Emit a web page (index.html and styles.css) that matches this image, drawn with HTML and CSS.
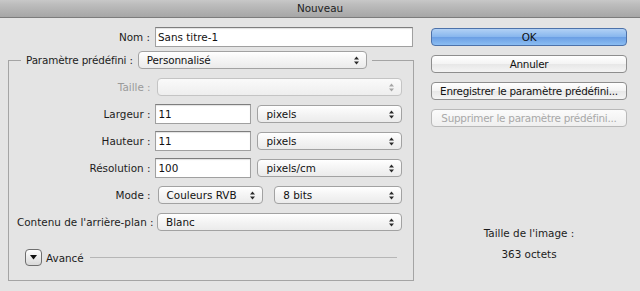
FILE: index.html
```html
<!DOCTYPE html>
<html lang="fr">
<head>
    <meta charset="UTF-8">
    <meta name="viewport" content="width=device-width, initial-scale=1.0">
    <title>Nouveau</title>
    <link rel="stylesheet" href="styles.css">
</head>
<body>
    <div class="titlebar">Nouveau</div>

    <div class="dialog">
        <div class="main">
            <div class="name-row">
                <label class="lbl" for="docName">Nom :</label>
                <input type="text" id="docName" class="field name" value="Sans titre-1">
            </div>

            <fieldset class="preset">
                <legend>
                    <span>Paramètre prédéfini :</span>
                    <div class="popup preset-popup">Personnalisé
                        <svg class="arrows" width="5" height="9" viewBox="0 0 5 9"><path d="M0 3.5L2.5 0.5L5 3.5Z M0 5.5L2.5 8.5L5 5.5Z"/></svg>
                    </div>
                </legend>

                <div class="rows">
                    <div class="row disabled">
                        <span class="lbl">Taille :</span>
                        <div class="popup wide off">
                            <span></span>
                            <svg class="arrows" width="5" height="9" viewBox="0 0 5 9"><path d="M0 3.5L2.5 0.5L5 3.5Z M0 5.5L2.5 8.5L5 5.5Z"/></svg>
                        </div>
                    </div>
                    <div class="row">
                        <label class="lbl" for="width">Largeur :</label>
                        <input type="text" id="width" class="field num" value="11">
                        <div class="popup unit">pixels
                            <svg class="arrows" width="5" height="9" viewBox="0 0 5 9"><path d="M0 3.5L2.5 0.5L5 3.5Z M0 5.5L2.5 8.5L5 5.5Z"/></svg>
                        </div>
                    </div>
                    <div class="row">
                        <label class="lbl" for="height">Hauteur :</label>
                        <input type="text" id="height" class="field num" value="11">
                        <div class="popup unit">pixels
                            <svg class="arrows" width="5" height="9" viewBox="0 0 5 9"><path d="M0 3.5L2.5 0.5L5 3.5Z M0 5.5L2.5 8.5L5 5.5Z"/></svg>
                        </div>
                    </div>
                    <div class="row">
                        <label class="lbl" for="res">Résolution :</label>
                        <input type="text" id="res" class="field num" value="100">
                        <div class="popup unit">pixels/cm
                            <svg class="arrows" width="5" height="9" viewBox="0 0 5 9"><path d="M0 3.5L2.5 0.5L5 3.5Z M0 5.5L2.5 8.5L5 5.5Z"/></svg>
                        </div>
                    </div>
                    <div class="row">
                        <span class="lbl">Mode :</span>
                        <div class="popup mode">Couleurs RVB
                            <svg class="arrows" width="5" height="9" viewBox="0 0 5 9"><path d="M0 3.5L2.5 0.5L5 3.5Z M0 5.5L2.5 8.5L5 5.5Z"/></svg>
                        </div>
                        <div class="popup depth">8 bits
                            <svg class="arrows" width="5" height="9" viewBox="0 0 5 9"><path d="M0 3.5L2.5 0.5L5 3.5Z M0 5.5L2.5 8.5L5 5.5Z"/></svg>
                        </div>
                    </div>
                    <div class="row">
                        <span class="lbl">Contenu de l'arrière-plan :</span>
                        <div class="popup wide">Blanc
                            <svg class="arrows" width="5" height="9" viewBox="0 0 5 9"><path d="M0 3.5L2.5 0.5L5 3.5Z M0 5.5L2.5 8.5L5 5.5Z"/></svg>
                        </div>
                    </div>
                </div>

                <div class="advanced">
                    <span class="disclosure">
                        <svg width="7" height="5" viewBox="0 0 7 5"><path d="M0 0H7L3.5 4.5Z"/></svg>
                    </span>
                    <span>Avancé</span>
                    <span class="rule"></span>
                </div>
            </fieldset>
        </div>

        <div class="side">
            <div class="buttons">
                <button type="button" class="btn default">OK</button>
                <button type="button" class="btn">Annuler</button>
                <button type="button" class="btn">Enregistrer le paramètre prédéfini...</button>
                <button type="button" class="btn" disabled>Supprimer le paramètre prédéfini...</button>
            </div>

            <div class="info">
                <p>Taille de l'image :</p>
                <p>363 octets</p>
            </div>
        </div>
    </div>
</body>
</html>
```

FILE: styles.css
```css
body {
    margin: 0;
    font-family: "DejaVu Sans", sans-serif;
    font-size: 10.4px;
    color: #1c1c1c;
    background-color: #e4e4e4;
}

.titlebar {
    height: 17px;
    line-height: 17px;
    text-align: center;
    color: #222;
    background: linear-gradient(#c8c8c8, #bdbdbd 25%, #a6a6a6);
    border-bottom: 1px solid #7c7c7c;
}

.dialog {
    display: flex;
}

.main {
    padding: 9px 0 0 8px;
}

.name-row {
    display: flex;
    align-items: center;
    gap: 5px;
}

.name-row .lbl {
    width: 142px;
    text-align: right;
}

.field {
    height: 20px;
    box-sizing: border-box;
    margin: 0;
    padding: 0 2px;
    border: 1px solid #a0a0a0;
    border-top-color: #7e7e7e;
    background-color: #fff;
    box-shadow: inset 0 1px 1px rgba(0, 0, 0, 0.12);
    font: inherit;
    color: #111;
    outline: none;
}

.name {
    width: 258px;
}

.num {
    width: 96px;
}

.preset {
    width: 406px;
    box-sizing: border-box;
    min-width: 0;
    margin: 4px 0 0;
    padding: 8px 11px 14px 8px;
    border: 1px solid #a4a4a4;
}

.preset legend {
    display: flex;
    align-items: center;
    gap: 5px;
    margin-left: 4px;
    padding: 0 5px;
    letter-spacing: -0.15px;
}

.popup {
    height: 18px;
    box-sizing: border-box;
    display: flex;
    align-items: center;
    justify-content: space-between;
    padding: 0 7px 0 8px;
    border: 1px solid #a2a2a2;
    border-radius: 4px;
    background: linear-gradient(#ffffff, #f4f4f4 50%, #ebebeb);
    color: #111;
}

.arrows {
    fill: #2a2a2a;
}

.preset-popup {
    width: 229px;
}

.rows {
    display: flex;
    flex-direction: column;
    gap: 7px;
}

.row {
    display: flex;
    align-items: center;
    height: 20px;
}

.row .lbl {
    width: 134px;
    margin-right: 5px;
    text-align: right;
    white-space: nowrap;
}

.row.disabled .lbl {
    color: #9a9a9a;
}

.popup.wide {
    width: 246px;
    margin-left: 1px;
}

.popup.off {
    border-color: #c4c4c4;
    background: linear-gradient(#fafafa, #eeeeee);
}

.popup.off .arrows {
    fill: #a5a5a5;
}

.popup.unit {
    width: 145px;
    margin-left: 6px;
}

.popup.mode {
    width: 106px;
    margin-left: 2px;
}

.popup.depth {
    width: 128px;
    margin-left: 11px;
}

.advanced {
    display: flex;
    align-items: center;
    height: 17px;
    margin: 17px 0 0 8px;
}

.disclosure {
    width: 17px;
    height: 17px;
    box-sizing: border-box;
    display: flex;
    align-items: center;
    justify-content: center;
    margin-right: 4px;
    border: 1px solid #6e6e6e;
    border-radius: 4px;
    background: linear-gradient(#ffffff, #d8d8d8);
}

.disclosure svg {
    fill: #111;
}

.rule {
    flex: 1;
    height: 1px;
    margin: 0 5px 0 6px;
    background-color: #b6b6b6;
}

.side {
    width: 196px;
    margin-left: 17px;
    padding-top: 10px;
}

.buttons {
    display: flex;
    flex-direction: column;
    gap: 9px;
}

.btn {
    height: 18px;
    box-sizing: border-box;
    margin: 0;
    padding: 0;
    border: 1px solid #8e8e8e;
    border-radius: 4px;
    background: linear-gradient(#ffffff, #f3f3f3 50%, #e7e7e7 51%, #f4f4f4);
    font: inherit;
    letter-spacing: -0.25px;
    white-space: nowrap;
    color: #111;
    text-align: center;
}

.btn.default {
    border-color: #4d72aa;
    background: linear-gradient(#b2d1f5, #88b7ee 48%, #6b9fe4 52%, #8bbdf2);
}

.btn:disabled {
    border-color: #b9b9b9;
    color: #a8a8a8;
    background: linear-gradient(#fbfbfb, #efefef);
}

.info {
    margin-top: 96px;
    text-align: center;
}

.info p {
    margin: 0;
    line-height: 21px;
}
```
